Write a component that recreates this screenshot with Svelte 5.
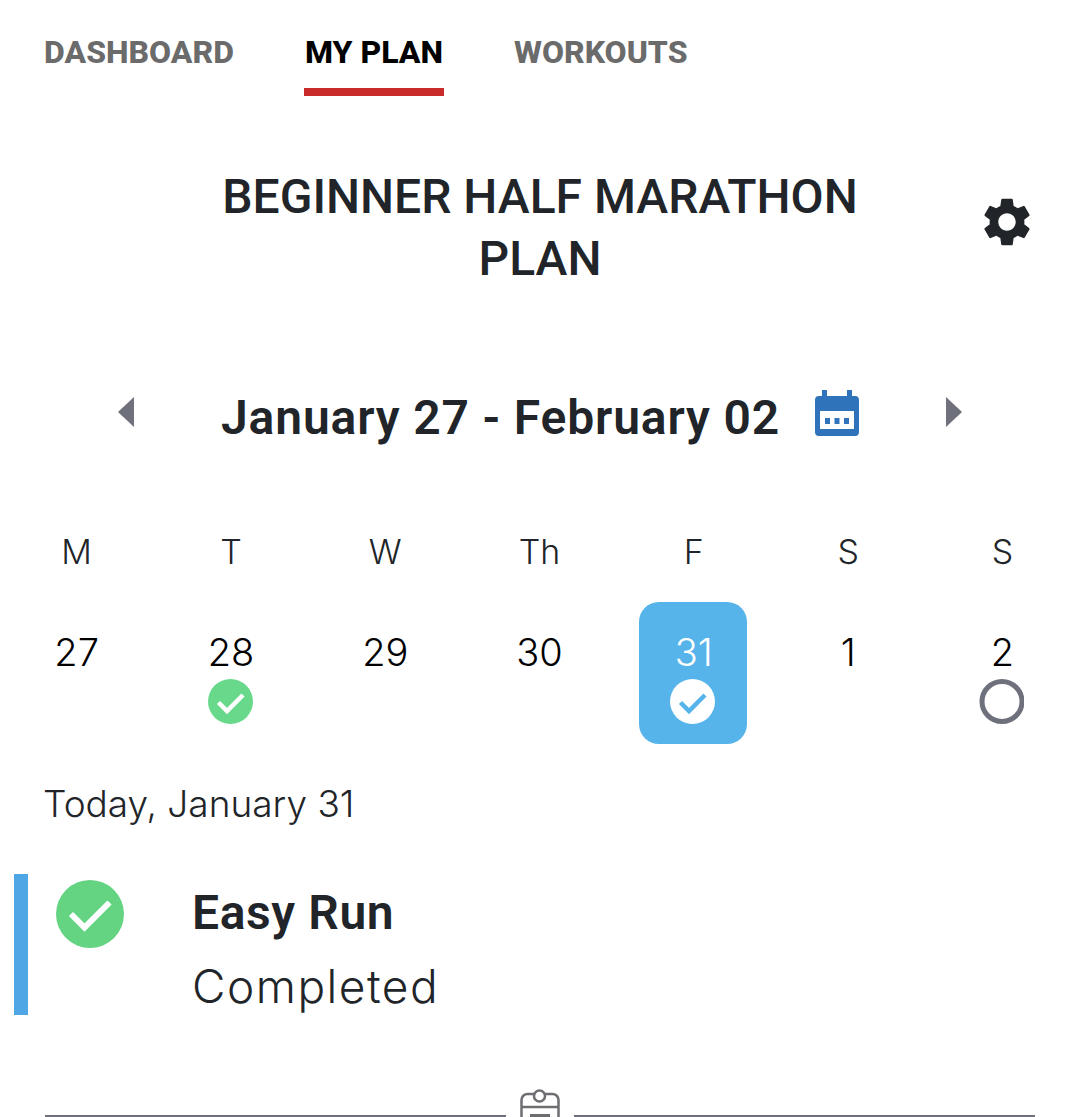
<script lang="ts">
  const tabs = [
    { label: 'DASHBOARD', width: 190 },
    { label: 'MY PLAN', width: 140, active: true },
    { label: 'WORKOUTS', width: 172 }
  ];

  type Status = 'done' | 'todo' | undefined;
  const days: { name: string; date: number; status?: Status; today?: boolean }[] = [
    { name: 'M', date: 27 },
    { name: 'T', date: 28, status: 'done' },
    { name: 'W', date: 29 },
    { name: 'Th', date: 30 },
    { name: 'F', date: 31, status: 'done', today: true },
    { name: 'S', date: 1 },
    { name: 'S', date: 2, status: 'todo' }
  ];
</script>

<div class="page">
  <nav class="tabs">
    {#each tabs as tab}
      <div class="tab" class:active={tab.active} style="width: {tab.width}px">{tab.label}</div>
    {/each}
  </nav>

  <header class="plan">
    <h1>BEGINNER HALF MARATHON<br />PLAN</h1>
    <svg class="gear" viewBox="0 0 24 24" aria-hidden="true">
      <path d="M19.14 12.94c.04-.3.06-.61.06-.94 0-.32-.02-.64-.07-.94l2.03-1.58a.49.49 0 0 0 .12-.61l-1.92-3.32a.488.488 0 0 0-.59-.22l-2.39.96c-.5-.38-1.03-.7-1.62-.94l-.36-2.54a.484.484 0 0 0-.48-.41h-3.84c-.24 0-.43.17-.47.41l-.36 2.54c-.59.24-1.13.57-1.62.94l-2.39-.96c-.22-.08-.47 0-.59.22L2.74 8.87c-.12.21-.08.47.12.61l2.03 1.58c-.05.3-.09.63-.09.94s.02.64.07.94l-2.03 1.58a.49.49 0 0 0-.12.61l1.92 3.32c.12.22.37.29.59.22l2.39-.96c.5.38 1.03.7 1.62.94l.36 2.54c.05.24.24.41.48.41h3.84c.24 0 .44-.17.47-.41l.36-2.54c.59-.24 1.13-.56 1.62-.94l2.39.96c.22.08.47 0 .59-.22l1.92-3.32c.12-.22.07-.47-.12-.61l-2.01-1.58zM12 15.6c-1.98 0-3.6-1.62-3.6-3.6s1.62-3.6 3.6-3.6 3.6 1.62 3.6 3.6-1.62 3.6-3.6 3.6z" />
    </svg>
  </header>

  <div class="week">
    <span class="arrow left"></span>
    <div class="range">
      <span class="range-text">January 27 - February 02</span>
      <svg class="cal" viewBox="0 0 44 46" aria-hidden="true">
        <path class="cal-body" fill-rule="evenodd" d="M7 0h5v6h20V0h5v6h3a4 4 0 0 1 4 4v32a4 4 0 0 1-4 4H4a4 4 0 0 1-4-4V10a4 4 0 0 1 4-4h3zM5 21v18h34V21z" />
        <rect class="cal-body" x="10" y="28" width="5" height="6" />
        <rect class="cal-body" x="19.5" y="28" width="5" height="6" />
        <rect class="cal-body" x="29" y="28" width="5" height="6" />
      </svg>
    </div>
    <span class="arrow right"></span>
  </div>

  <div class="calendar">
    {#each days as day}
      <div class="day">
        <div class="day-name">{day.name}</div>
        <div class="cell" class:today={day.today}>
          <span class="date">{day.date}</span>
          {#if day.status === 'done'}
            <svg class="status" viewBox="0 0 45 45" aria-hidden="true">
              <circle class="disc" cx="22.5" cy="22.5" r="22.5" />
              <path class="tick" d="M10.5 23.5l8.500 8.500 16-16" />
            </svg>
          {:else if day.status === 'todo'}
            <svg class="status" viewBox="0 0 45 45" aria-hidden="true">
              <circle class="ring" cx="23" cy="22.5" r="20" />
            </svg>
          {/if}
        </div>
      </div>
    {/each}
  </div>

  <div class="today-label">Today, January 31</div>

  <section class="workout">
    <svg class="big-check" viewBox="0 0 68 68" aria-hidden="true">
      <circle cx="34" cy="34" r="34" />
      <path d="M15 34l13.500 13.500 25-25" />
    </svg>
    <div class="workout-text">
      <div class="workout-name">Easy Run</div>
      <div class="workout-status">Completed</div>
    </div>
  </section>

  <div class="divider">
    <span class="line"></span>
    <svg class="clip" viewBox="0 0 40 40" aria-hidden="true">
      <rect class="clip-body" x="1.500" y="5" width="37" height="40" rx="6" />
      <path class="clip-rule" d="M1.500 18h37" />
      <circle class="clip-knob" cx="19.500" cy="7" r="5.500" />
      <rect class="clip-bar" x="10" y="25" width="20" height="3" />
    </svg>
    <span class="line"></span>
  </div>
</div>

<style>
  :global(body) {
    margin: 0;
    background: #fff;
  }

  .page {
    width: 1080px;
    height: 1117px;
    overflow: hidden;
    color: #212529;
    font-family: 'Inter', sans-serif;
  }

  .tabs {
    display: flex;
    gap: 70px;
    padding: 28px 0 0 44px;
  }

  .tab {
    height: 60px;
    line-height: 48px;
    font-family: 'Roboto', sans-serif;
    font-size: 32px;
    font-weight: 800;
    color: #6b6b6b;
    text-align: center;
    white-space: nowrap;
    border-bottom: 8px solid transparent;
  }

  .tab.active {
    color: #000;
    border-bottom-color: #c92a2a;
  }

  .plan {
    position: relative;
    margin-top: 70px;
    text-align: center;
  }

  h1 {
    margin: 0;
    font-family: 'Roboto', sans-serif;
    font-size: 48px;
    font-weight: 500;
    line-height: 62px;
    color: #212529;
  }

  .gear {
    position: absolute;
    right: 44px;
    top: 27px;
    width: 58px;
    height: 58px;
    fill: #212529;
  }

  .week {
    display: flex;
    align-items: center;
    justify-content: space-between;
    margin-top: 86px;
    padding: 0 118px;
    height: 72px;
  }

  .arrow {
    width: 0;
    height: 0;
    border-top: 15px solid transparent;
    border-bottom: 15px solid transparent;
  }

  .arrow.left {
    border-right: 16px solid #6e707c;
  }

  .arrow.right {
    border-left: 16px solid #6e707c;
  }

  .range {
    display: flex;
    align-items: center;
    gap: 35px;
    font-family: 'Roboto', sans-serif;
    font-size: 48px;
    font-weight: 600;
    letter-spacing: 0.85px;
    color: #212529;
  }

  .range-text {
    padding-top: 10px;
  }

  .cal {
    width: 44px;
    height: 46px;
    margin-top: 2px;
  }

  .cal-body {
    fill: #2f73ba;
  }

  .calendar {
    display: grid;
    grid-template-columns: repeat(7, 154.300px);
    margin: 79px 0 0 -1px;
  }

  .day {
    display: flex;
    flex-direction: column;
    align-items: center;
  }

  .day-name {
    padding-left: 1px;
    font-size: 34px;
    font-weight: 300;
    line-height: 50px;
    color: #212529;
  }

  .cell {
    display: flex;
    flex-direction: column;
    align-items: center;
    width: 108px;
    height: 142px;
    margin-top: 25px;
    padding-top: 25px;
    box-sizing: border-box;
    border-radius: 20px;
    color: #000;
  }

  .cell.today {
    background: #56b4ea;
    color: #fff;
  }

  .date {
    padding-left: 1px;
    font-size: 38px;
    font-weight: 300;
    line-height: 50px;
    height: 52px;
  }

  .status {
    width: 45px;
    height: 45px;
  }

  .disc {
    fill: #68d98a;
  }

  .tick {
    fill: none;
    stroke: #fff;
    stroke-width: 4.500;
  }

  .today .status {
    margin-right: 1px;
  }

  .today .disc {
    fill: #fff;
  }

  .today .tick {
    stroke: #56b4ea;
  }

  .ring {
    fill: none;
    stroke: #6e707c;
    stroke-width: 5;
  }

  .today-label {
    margin: 35px 0 0 43px;
    font-size: 37px;
    font-weight: 300;
    line-height: 50px;
  }

  .workout {
    display: flex;
    margin: 45px 0 0 14px;
    height: 141px;
    border-left: 14px solid #4fa6e4;
  }

  .big-check {
    width: 68px;
    height: 68px;
    margin: 6px 0 0 28px;
  }

  .big-check circle {
    fill: #64d382;
  }

  .big-check path {
    fill: none;
    stroke: #fff;
    stroke-width: 6;
  }

  .workout-text {
    margin-left: 68px;
  }

  .workout-name {
    font-family: 'Roboto', sans-serif;
    font-size: 48px;
    font-weight: 600;
    letter-spacing: 0.6px;
    line-height: 72px;
    margin-top: 3px;
  }

  .workout-status {
    font-size: 46px;
    font-weight: 300;
    letter-spacing: 1.500px;
    line-height: 60px;
    margin-top: 7px;
  }

  .divider {
    display: flex;
    align-items: flex-start;
    gap: 14px;
    margin: 74px 45px 0;
    height: 40px;
  }

  .line {
    flex: 1;
    height: 2px;
    margin-top: 26px;
    background: #6e707c;
  }

  .clip {
    width: 40px;
    height: 40px;
    flex: none;
  }

  .clip-body,
  .clip-knob {
    fill: #fff;
    stroke: #6e6e72;
    stroke-width: 2.500;
  }

  .clip-rule {
    fill: none;
    stroke: #6e6e72;
    stroke-width: 2.500;
  }

  .clip-bar {
    fill: #6e6e72;
  }
</style>
